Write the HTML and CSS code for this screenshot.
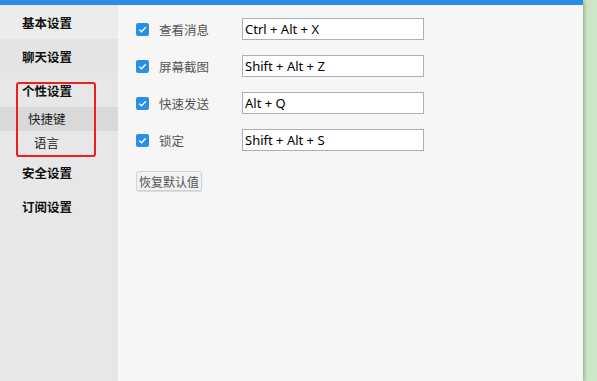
FILE: index.html
```html
<!DOCTYPE html>
<html lang="zh-CN">
<head>
    <meta charset="UTF-8">
    <title>设置 - 快捷键</title>
    <link rel="stylesheet" href="styles.css">
</head>
<body>

<div class="app">
    <div class="title-bar"></div>

    <div class="main">
        <!-- Left menu -->
        <ul class="menu">
            <li class="menu-item">基本设置</li>
            <li class="menu-item hover">聊天设置</li>
            <li class="menu-item">个性设置</li>
            <li class="sub-item active">快捷键</li>
            <li class="sub-item lang">语言</li>
            <li class="menu-item">安全设置</li>
            <li class="menu-item">订阅设置</li>
        </ul>

        <!-- Shortcut settings -->
        <section class="content">
            <div class="row">
                <span class="check"><svg width="13" height="13" viewBox="0 0 13 13"><path d="M3.2 6.6 L5.5 8.8 L9.8 4.3" fill="none" stroke="#fff" stroke-width="1.3"/></svg></span>
                <span class="label">查看消息</span>
                <input class="keys" type="text" value="Ctrl + Alt + X">
            </div>
            <div class="row">
                <span class="check"><svg width="13" height="13" viewBox="0 0 13 13"><path d="M3.2 6.6 L5.5 8.8 L9.8 4.3" fill="none" stroke="#fff" stroke-width="1.3"/></svg></span>
                <span class="label">屏幕截图</span>
                <input class="keys" type="text" value="Shift + Alt + Z">
            </div>
            <div class="row">
                <span class="check"><svg width="13" height="13" viewBox="0 0 13 13"><path d="M3.2 6.6 L5.5 8.8 L9.8 4.3" fill="none" stroke="#fff" stroke-width="1.3"/></svg></span>
                <span class="label">快速发送</span>
                <input class="keys" type="text" value="Alt + Q">
            </div>
            <div class="row">
                <span class="check"><svg width="13" height="13" viewBox="0 0 13 13"><path d="M3.2 6.6 L5.5 8.8 L9.8 4.3" fill="none" stroke="#fff" stroke-width="1.3"/></svg></span>
                <span class="label">锁定</span>
                <input class="keys" type="text" value="Shift + Alt + S">
            </div>

            <button class="reset-btn">恢复默认值</button>
        </section>
    </div>

    <!-- annotation box round the personal settings -->
    <div class="mark"></div>
</div>

<div class="desk"></div>

</body>
</html>
```

FILE: styles.css
```css
html, body {
    margin: 0;
    padding: 0;
    height: 100%;
    overflow: hidden;
}
body {
    display: flex;
    font-family: "Noto Sans", "Noto Sans CJK SC", sans-serif;
    background-color: #cde6c9;
}
.app {
    width: 583px;
    height: 100%;
    display: flex;
    flex-direction: column;
    position: relative;
    box-shadow: 1px 0 4px rgba(60, 70, 60, 0.45);
    z-index: 1;
}
.title-bar {
    height: 5px;
    background-color: #2a8fe4;
}
.main {
    flex: 1;
    display: flex;
}
.menu {
    width: 118px;
    margin: 0;
    padding: 0;
    list-style: none;
    background-color: #e7e7e7;
}
.menu-item {
    height: 30px;
    line-height: 30px;
    padding: 4px 0 0 22px;
    font-size: 12.5px;
    font-weight: bold;
    color: #111;
}
.menu-item:first-child {
    background-color: #ececec;
}
.menu-item.hover {
    background-color: #e4e4e4;
}
.sub-item {
    height: 22px;
    line-height: 22px;
    padding: 2px 0 0 28px;
    font-size: 12.5px;
    color: #222;
}
.sub-item.lang {
    padding-left: 34px;
}
.sub-item.active {
    background-color: #d9d9d9;
}
.content {
    flex: 1;
    background-color: #f6f6f6;
    padding: 13px 0 0 18px;
}
.row {
    display: flex;
    align-items: center;
    height: 22px;
    margin-bottom: 15px;
}
.check {
    width: 13px;
    height: 13px;
    border-radius: 2px;
    background-color: #2a8fe6;
    display: flex;
    margin-right: 10px;
}
.label {
    width: 83px;
    font-size: 12.5px;
    color: #555;
}
.keys {
    box-sizing: border-box;
    width: 182px;
    height: 22px;
    margin: 0;
    padding: 0 0 0 2px;
    border: 1px solid #a7b1be;
    background-color: #fff;
    font-family: "Noto Sans", "Noto Sans CJK SC", sans-serif;
    font-size: 13px;
    color: #000;
    outline: none;
}
.reset-btn {
    display: block;
    box-sizing: border-box;
    width: 66px;
    height: 20px;
    margin-top: 20px;
    padding: 0;
    border: 1px solid #d2d2d2;
    border-radius: 3px;
    background-color: #f2f2f2;
    box-shadow: 0 1px 1px rgba(0, 0, 0, 0.12);
    font-family: "Noto Sans CJK SC", sans-serif;
    font-size: 12px;
    color: #555;
}
.desk {
    flex: 1;
    background-color: #cde6c9;
}
.mark {
    position: absolute;
    left: 16px;
    top: 82px;
    width: 80px;
    height: 75px;
    box-sizing: border-box;
    border: 2px solid #e8231f;
    border-radius: 3px;
}
```
